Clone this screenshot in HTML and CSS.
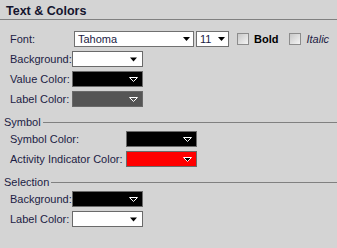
FILE: index.html
```html
<!DOCTYPE html>
<html lang="en">
<head>
    <meta charset="UTF-8">
    <title>Text &amp; Colors</title>
    <link rel="stylesheet" href="styles.css">
</head>
<body>
    <div class="header">Text &amp; Colors</div>

    <div class="rows first">
        <div class="row">
            <span class="label">Font:</span>
            <div class="combo font-combo">
                <span>Tahoma</span>
                <svg class="arrow" width="7" height="4"><polygon points="0,0 7,0 3.5,4" fill="#000"/></svg>
            </div>
            <div class="combo size-combo">
                <span>11</span>
                <svg class="arrow" width="7" height="4"><polygon points="0,0 7,0 3.5,4" fill="#000"/></svg>
            </div>
            <span class="check"></span>
            <span class="bold">Bold</span>
            <span class="check"></span>
            <span class="italic">Italic</span>
        </div>
        <div class="row">
            <span class="label">Background:</span>
            <div class="swatch light">
                <svg width="9" height="5"><polygon points="1,0.5 8,0.5 4.5,4.5" fill="#000"/></svg>
            </div>
        </div>
        <div class="row">
            <span class="label">Value Color:</span>
            <div class="swatch dark">
                <svg width="9" height="5"><polygon points="0.5,0.5 8.5,0.5 4.5,4.5" fill="#000" stroke="#fff"/></svg>
            </div>
        </div>
        <div class="row">
            <span class="label">Label Color:</span>
            <div class="swatch grey">
                <svg width="9" height="5"><polygon points="0.5,0.5 8.5,0.5 4.5,4.5" fill="#555" stroke="#fff"/></svg>
            </div>
        </div>
    </div>

    <div class="section-title"><span>Symbol</span><i></i></div>
    <div class="rows wide">
        <div class="row">
            <span class="label">Symbol Color:</span>
            <div class="swatch dark">
                <svg width="9" height="5"><polygon points="0.5,0.5 8.5,0.5 4.5,4.5" fill="#000" stroke="#fff"/></svg>
            </div>
        </div>
        <div class="row">
            <span class="label">Activity Indicator Color:</span>
            <div class="swatch red">
                <svg width="9" height="5"><polygon points="0.5,0.5 8.5,0.5 4.5,4.5" fill="#000" stroke="#fff"/></svg>
            </div>
        </div>
    </div>

    <div class="section-title"><span>Selection</span><i></i></div>
    <div class="rows">
        <div class="row">
            <span class="label">Background:</span>
            <div class="swatch dark">
                <svg width="9" height="5"><polygon points="0.5,0.5 8.5,0.5 4.5,4.5" fill="#000" stroke="#fff"/></svg>
            </div>
        </div>
        <div class="row">
            <span class="label">Label Color:</span>
            <div class="swatch light">
                <svg width="9" height="5"><polygon points="1,0.5 8,0.5 4.5,4.5" fill="#000"/></svg>
            </div>
        </div>
    </div>
</body>
</html>
```

FILE: styles.css
```css
body {
    margin: 0;
    background-color: #d4d4d4;
    font-family: "Liberation Sans", Arial, sans-serif;
    font-size: 11px;
    color: #1c1c44;
}
.header {
    height: 16px;
    padding: 3px 6px 0;
    border-bottom: 1px solid #808080;
    font-size: 12.5px;
    font-weight: bold;
    line-height: 16px;
    color: #15152e;
}
.rows {
    display: flex;
    flex-direction: column;
    gap: 4px;
    padding-left: 10px;
}
.rows.first {
    padding-top: 11px;
}
.row {
    display: flex;
    align-items: center;
    height: 16px;
}
.label {
    width: 62px;
    flex: none;
}
.wide .label {
    width: 116px;
}
.combo {
    box-sizing: border-box;
    height: 16px;
    display: flex;
    align-items: center;
    background-color: #fff;
    border: 1px solid #707070;
    padding: 0 3px;
}
.combo span {
    flex: 1;
}
.font-combo {
    width: 120px;
    margin-left: 2px;
}
.size-combo {
    width: 33px;
    margin-left: 2px;
}
.arrow {
    display: block;
}
.check {
    box-sizing: border-box;
    width: 12px;
    height: 12px;
    margin-left: 8px;
    border: 1px solid #8c8c8c;
    background: linear-gradient(135deg, #c8c8c8, #f4f4f4);
}
.bold {
    font-weight: bold;
    margin-left: 5px;
    color: #000;
}
.italic {
    font-style: italic;
    margin-left: 5px;
}
.bold + .check {
    margin-left: 11px;
}
.swatch {
    box-sizing: border-box;
    width: 71px;
    height: 16px;
    border: 1px solid #6a6a6a;
    display: flex;
    align-items: center;
    justify-content: flex-end;
    padding-right: 4px;
}
.swatch svg {
    display: block;
}
.light { background-color: #fff; }
.dark { background-color: #000; }
.grey { background-color: #555; }
.red { background-color: #f00; }
.section-title {
    display: flex;
    align-items: center;
    height: 16px;
    margin: 7px 0 1px;
    padding-left: 4px;
}
.section-title i {
    flex: 1;
    height: 1px;
    margin-left: 2px;
    background-color: #808080;
}
```
